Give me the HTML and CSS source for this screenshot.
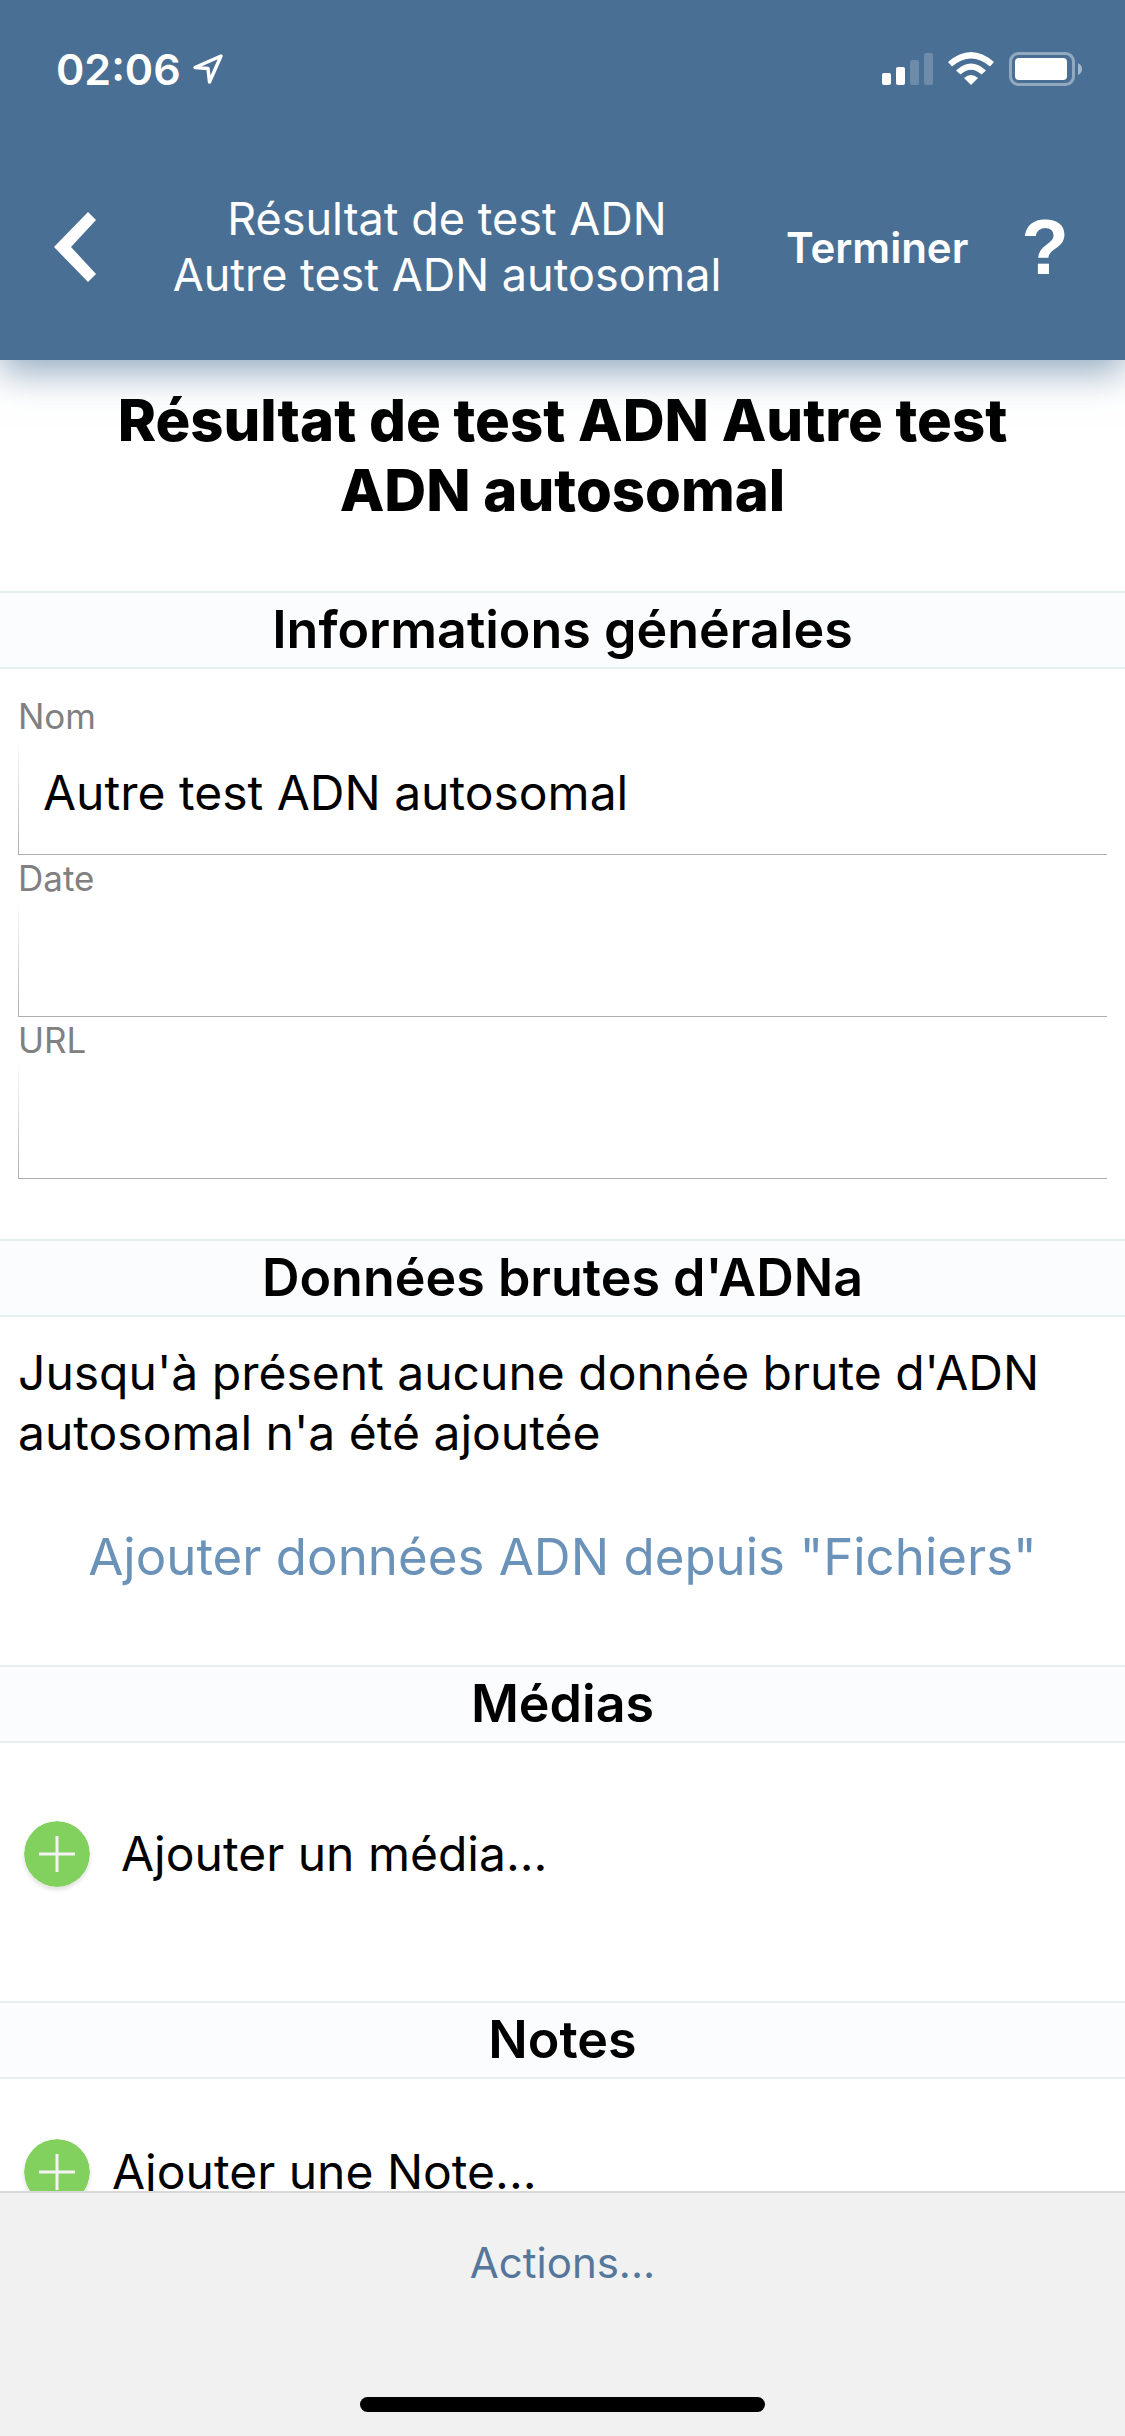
FILE: index.html
```html
<!DOCTYPE html>
<html lang="fr">
<head>
<meta charset="UTF-8">
<meta name="viewport" content="width=device-width, initial-scale=1.0">
<title>Résultat de test ADN</title>
<link rel="stylesheet" href="styles.css">
</head>
<body>

<header class="header">
    <div class="status">
        <span class="time">02:06</span>
        <svg class="location" width="32" height="32" viewBox="0 0 32 32">
            <path d="M29 3 L3 14.5 L16 15.5 L17.5 29 Z" fill="none" stroke="#fff" stroke-width="3.4" stroke-linejoin="round"/>
        </svg>
        <svg class="indicators" width="201" height="34" viewBox="0 0 201 34" fill="#fff">
            <rect x="0" y="21" width="9" height="12" rx="2"/>
            <rect x="14" y="15" width="9" height="18" rx="2"/>
            <rect x="28" y="8" width="9" height="25" rx="2" opacity="0.2"/>
            <rect x="42" y="1" width="9" height="32" rx="2" opacity="0.2"/>
            <path d="M66 10 Q89 -10 112 10 L108 14.500 Q89 -1.500 70 14.500 Z"/>
            <path d="M74 18.500 Q89 4.500 104 18.500 L99.500 22.500 Q89 13 78.500 22.500 Z"/>
            <path d="M82 26 Q89 20 96 26 L89 33 Z"/>
            <rect x="128.500" y="1.500" width="63" height="31" rx="8" fill="none" stroke="#fff" stroke-width="3" opacity="0.4"/>
            <rect x="133" y="6" width="52" height="22" rx="4"/>
            <path d="M196 11 Q200 13 200 17 Q200 21 196 23 Z" opacity="0.5"/>
        </svg>
    </div>
    <nav class="nav">
        <button class="back" type="button" aria-label="Retour">
            <svg width="42" height="70" viewBox="0 0 42 70"><path d="M0 35 L34 0 L42 8 L17 35 L42 62 L34 70 Z" fill="#fff"/></svg>
        </button>
        <div class="nav-title">Résultat de test ADN<br>Autre test ADN autosomal</div>
        <button class="done" type="button">Terminer</button>
        <button class="help" type="button" aria-label="Aide">?</button>
    </nav>
</header>

<main class="content">
    <h1 class="title">Résultat de test ADN Autre test ADN autosomal</h1>

    <h2 class="section-title">Informations générales</h2>
    <form class="fields">
        <label class="label" for="nom">Nom</label>
        <input class="field" id="nom" type="text" value="Autre test ADN autosomal">
        <label class="label" for="date">Date</label>
        <input class="field" id="date" type="text">
        <label class="label" for="url">URL</label>
        <input class="field" id="url" type="text">
    </form>

    <h2 class="section-title">Données brutes d'ADNa</h2>
    <div class="dna">
        <p class="text">Jusqu'à présent aucune donnée brute d'ADN autosomal n'a été ajoutée</p>
        <a class="link" href="#">Ajouter données ADN depuis "Fichiers"</a>
    </div>

    <h2 class="section-title">Médias</h2>
    <button class="add add-media" type="button">
        <svg class="plus" width="66" height="66" viewBox="0 0 66 66"><circle cx="33" cy="33" r="33" fill="#82d05e"/><path d="M33 15 V51 M15 33 H51" stroke="#f3f3f3" stroke-width="3"/></svg>
        Ajouter un média...
    </button>

    <h2 class="section-title">Notes</h2>
    <button class="add add-note" type="button">
        <svg class="plus" width="66" height="66" viewBox="0 0 66 66"><circle cx="33" cy="33" r="33" fill="#82d05e"/><path d="M33 15 V51 M15 33 H51" stroke="#f3f3f3" stroke-width="3"/></svg>
        Ajouter une Note...
    </button>
</main>

<footer class="footer">
    <button class="actions" type="button">Actions...</button>
    <div class="home-bar"></div>
</footer>

</body>
</html>
```
FILE: styles.css
```css
* {
    box-sizing: border-box;
}

body {
    margin: 0;
    height: 100vh;
    display: flex;
    flex-direction: column;
    overflow: hidden;
    background-color: #fff;
    color: #000;
    font-family: Inter, "Liberation Sans", sans-serif;
    font-size: 48px;
}

button {
    padding: 0;
    border: none;
    background: none;
    color: inherit;
    font-family: inherit;
    cursor: pointer;
}

svg {
    display: block;
    flex-shrink: 0;
}

/* header */
.header {
    position: relative;
    z-index: 1;
    flex-shrink: 0;
    background-color: #4a6f94;
    color: #fff;
    box-shadow: 0 12px 36px rgba(74, 111, 148, 0.6);
}

.status {
    display: flex;
    align-items: center;
    padding: 40px 42px 0 56px;
    height: 98px;
}

.time {
    font-size: 43px;
    font-weight: 600;
}

.location {
    margin-left: 11px;
}

.indicators {
    margin-left: auto;
}

.nav {
    display: flex;
    align-items: center;
    padding: 93px 56px 57px 54px;
}

.nav-title {
    flex: 1;
    padding-left: 12px;
    font-size: 45px;
    line-height: 56px;
    text-align: center;
}

.done {
    margin-right: 53px;
    font-size: 42px;
    font-weight: 600;
}

.help {
    font-family: "Liberation Sans", sans-serif;
    font-size: 78px;
    font-weight: bold;
    line-height: 76px;
}

/* content */
.content {
    flex: 1;
    min-height: 0;
    overflow: hidden;
}

.title {
    margin: 0;
    padding: 25px 80px 66px;
    font-size: 58px;
    font-weight: 800;
    line-height: 70px;
    text-align: center;
}

.section-title {
    margin: 0;
    border-top: 2px solid #e7eef0;
    border-bottom: 2px solid #e7eef0;
    background-color: #fbfcfe;
    font-size: 52px;
    font-weight: 600;
    line-height: 74px;
    text-align: center;
}

.fields {
    display: flex;
    flex-direction: column;
    padding: 24px 18px 60px;
}

.label {
    color: #808080;
    font-size: 35px;
    line-height: 46px;
}

.field {
    width: 100%;
    height: 116px;
    padding: 0 25px 8px;
    border: none;
    border-bottom: 1px solid #aeaeae;
    border-radius: 0;
    background: linear-gradient(#fff, #aeaeae) left / 1px 100% no-repeat;
    color: #000;
    font-family: inherit;
    font-size: 48px;
    outline: none;
}

.dna {
    padding: 26px 18px 78px;
}

.text {
    margin: 0 0 64px;
    line-height: 60px;
}

.link {
    display: block;
    color: #6b93b9;
    font-size: 51px;
    line-height: 60px;
    text-align: center;
    text-decoration: none;
}

.add {
    display: flex;
    align-items: center;
    width: 100%;
    padding-left: 24px;
    font-size: 48px;
    line-height: 66px;
}

.add-media {
    gap: 31px;
    padding-top: 78px;
    padding-bottom: 114px;
}

.add-note {
    gap: 22px;
    padding-top: 60px;
}

.plus {
    border-radius: 50%;
    box-shadow: 0 3px 4px rgba(0, 0, 0, 0.12);
}

/* footer */
.footer {
    display: flex;
    flex-direction: column;
    align-items: center;
    flex-shrink: 0;
    padding: 42px 0 24px;
    border-top: 2px solid #d8d8d8;
    background-color: #f1f1f1;
}

.actions {
    margin-bottom: 106px;
    color: #54779a;
    font-size: 42px;
    line-height: 56px;
}

.home-bar {
    width: 36%;
    height: 15px;
    border-radius: 8px;
    background-color: #000;
}
```
